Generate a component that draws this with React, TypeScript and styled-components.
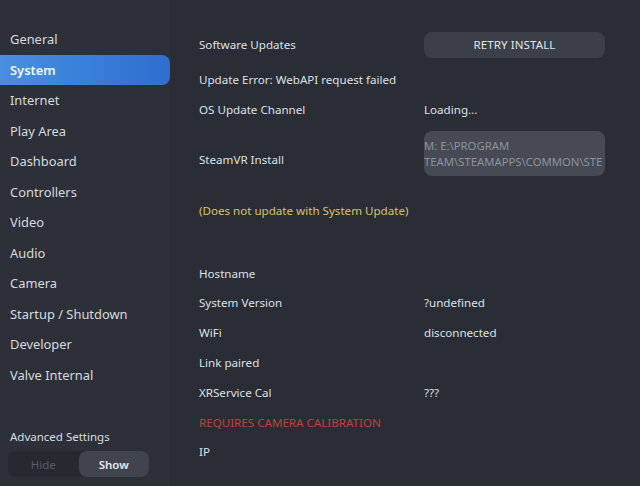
import React, { ReactElement } from "react";
import styled, { createGlobalStyle } from "styled-components";

const GlobalStyle = createGlobalStyle`
  html, body {
    margin: 0;
    padding: 0;
    background: #2a2d35;
  }
  body {
    font-family: "Noto Sans", "Open Sans", sans-serif;
    color: #dde1e6;
  }
`;

const Page = styled.div`
  display: flex;
  width: 640px;
  height: 486px;
  overflow: hidden;
  background: #2a2d35;
`;

const Sidebar = styled.nav`
  width: 170px;
  flex-shrink: 0;
  display: flex;
  flex-direction: column;
  padding-top: 24px;
  box-sizing: border-box;
  background: #2d3038;
`;

const NavItem = styled.div<{ active?: boolean }>`
  height: 30.5px;
  display: flex;
  align-items: center;
  padding-left: 10px;
  font-size: 12.9px;
  color: ${props => (props.active ? "#f4f6f8" : "#d6dadf")};
  font-weight: ${props => (props.active ? 600 : 400)};
  border-radius: 0 8px 8px 0;
  background: ${props =>
    props.active ? "linear-gradient(90deg, #4a8fde 0%, #3a7fd9 50%, #2f6ecf 100%)" : "transparent"};
`;

const Advanced = styled.div`
  margin-top: auto;
  padding: 0 8px 9px 8px;
  display: flex;
  flex-direction: column;
`;

const AdvancedLabel = styled.div`
  font-size: 11.5px;
  padding-left: 2px;
  height: 20px;
  line-height: 20px;
  color: #d9dde2;
  margin-bottom: 4px;
`;

const Toggle = styled.div`
  display: flex;
  width: 141px;
  height: 26px;
  border-radius: 8px;
  background: #262930;
`;

const ToggleOption = styled.div<{ on?: boolean }>`
  flex: 1;
  display: flex;
  align-items: center;
  justify-content: center;
  font-size: 11.5px;
  border-radius: 8px;
  font-weight: ${props => (props.on ? 600 : 400)};
  color: ${props => (props.on ? "#e6e9ec" : "#565a63")};
  background: ${props => (props.on ? "#40444d" : "transparent")};
`;

const Main = styled.main`
  flex: 1;
  padding: 30px 0 0 29px;
  display: flex;
  flex-direction: column;
`;

const Row = styled.div<{ gap?: number; tall?: boolean }>`
  display: flex;
  flex-shrink: 0;
  align-items: ${props => (props.tall ? "flex-start" : "center")};
  height: ${props => (props.tall ? 60 : 29.8)}px;
  margin-top: ${props => props.gap ?? 0}px;
  font-size: 11.6px;
`;

const Label = styled.div<{ tone?: "warn" | "error"; offset?: number }>`
  width: 225px;
  flex-shrink: 0;
  white-space: nowrap;
  margin-top: ${props => props.offset ?? 0}px;
  color: ${props =>
    props.tone === "warn" ? "#d6c46c" : props.tone === "error" ? "#c23f3a" : "#dde1e6"};
`;

const Value = styled.div`
  color: #dde1e6;
  white-space: nowrap;
`;

const Button = styled.div`
  width: 181px;
  height: 26px;
  border-radius: 8px;
  background: #3b3f48;
  display: flex;
  align-items: center;
  justify-content: center;
  font-size: 11.5px;
  color: #e2e6ea;
  letter-spacing: 0.1px;
`;

const PathBox = styled.div`
  width: 181px;
  height: 45px;
  margin-top: 7px;
  border-radius: 8px;
  background: #454a54;
  overflow: hidden;
  display: flex;
  flex-direction: column;
  justify-content: center;
  font-size: 11.3px;
  line-height: 16px;
  color: #8e939b;
  & > span {
    white-space: nowrap;
  }
`;

const navItems = [
  "General",
  "System",
  "Internet",
  "Play Area",
  "Dashboard",
  "Controllers",
  "Video",
  "Audio",
  "Camera",
  "Startup / Shutdown",
  "Developer",
  "Valve Internal"
];

const App = (): ReactElement => {
  return (
    <Page>
      <GlobalStyle />
      <Sidebar>
        {navItems.map(item => (
          <NavItem key={item} active={item === "System"}>
            {item}
          </NavItem>
        ))}
        <Advanced>
          <AdvancedLabel>Advanced Settings</AdvancedLabel>
          <Toggle>
            <ToggleOption>Hide</ToggleOption>
            <ToggleOption on>Show</ToggleOption>
          </Toggle>
        </Advanced>
      </Sidebar>
      <Main>
        <Row>
          <Label>Software Updates</Label>
          <Button>RETRY INSTALL</Button>
        </Row>
        <Row gap={5}>
          <Label>Update Error: WebAPI request failed</Label>
        </Row>
        <Row>
          <Label>OS Update Channel</Label>
          <Value>Loading...</Value>
        </Row>
        <Row tall>
          <Label offset={28}>SteamVR Install</Label>
          <PathBox>
            <span>M: E:\PROGRAM</span>
            <span>TEAM\STEAMAPPS\COMMON\STE</span>
          </PathBox>
        </Row>
        <Row gap={11}>
          <Label tone="warn">(Does not update with System Update)</Label>
        </Row>
        <Row gap={33}>
          <Label>Hostname</Label>
        </Row>
        <Row>
          <Label>System Version</Label>
          <Value>?undefined</Value>
        </Row>
        <Row>
          <Label>WiFi</Label>
          <Value>disconnected</Value>
        </Row>
        <Row>
          <Label>Link paired</Label>
        </Row>
        <Row>
          <Label>XRService Cal</Label>
          <Value>???</Value>
        </Row>
        <Row>
          <Label tone="error">REQUIRES CAMERA CALIBRATION</Label>
        </Row>
        <Row>
          <Label>IP</Label>
        </Row>
      </Main>
    </Page>
  );
};

export default App;
